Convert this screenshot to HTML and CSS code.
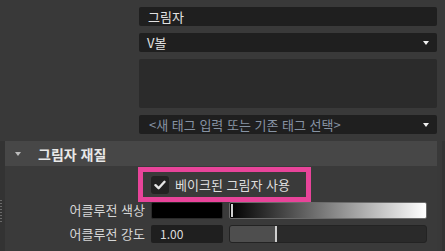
FILE: index.html
```html
<!DOCTYPE html>
<html lang="ko">
<head>
<meta charset="utf-8">
<link rel="stylesheet" href="styles.css">
</head>
<body>
<div class="app">
  <div class="top">
    <div class="field">그림자</div>
    <div class="field select"><span>V볼</span><span class="arrow"></span></div>
    <div class="textarea"></div>
    <div class="field select placeholder"><span>&lt;새 태그 입력 또는 기존 태그 선택&gt;</span><span class="arrow"></span></div>
  </div>
  <div class="section-wrap">
    <div class="left-strip"><div class="grip"></div></div>
    <div class="section">
      <div class="section-header"><span class="hdr-arrow"></span><span class="hdr-title">그림자 재질</span></div>
      <div class="section-body">
        <div class="check-row">
          <div class="highlight">
            <span class="checkbox"><svg width="12" height="10" viewBox="0 0 12 10"><path d="M1.5 5.2 L4.6 8.2 L10.5 1.8" fill="none" stroke="#e6e6e6" stroke-width="2.4" stroke-linecap="round" stroke-linejoin="round"/></svg></span>
            <span class="check-label">베이크된 그림자 사용</span>
          </div>
        </div>
        <div class="prop-row first">
          <span class="prop-label">어클루전 색상</span>
          <span class="swatch"></span>
          <span class="gradient"><span class="grad-handle"></span></span>
        </div>
        <div class="prop-row">
          <span class="prop-label">어클루전 강도</span>
          <span class="num">1.00</span>
          <span class="slider"><span class="slider-fill"></span><span class="slider-handle"></span></span>
        </div>
      </div>
    </div>
    <div class="right-strip"></div>
  </div>
</div>
</body>
</html>
```
FILE: styles.css
```css
* { box-sizing: border-box; }
html, body {
  margin: 0;
  padding: 0;
  width: 445px;
  height: 251px;
  overflow: hidden;
  background: #393939;
  font-family: "Noto Sans CJK KR", "Noto Sans", sans-serif;
  font-size: 13px;
  color: #dcdcdc;
}
.app {
  display: flex;
  flex-direction: column;
  height: 251px;
}
.top {
  display: flex;
  flex-direction: column;
  gap: 7px;
  padding: 7px 8px 0 139px;
}
.field {
  height: 19px;
  background: #1f1f1f;
  border-radius: 2px;
  display: flex;
  align-items: center;
  justify-content: space-between;
  padding: 0 8px 0 9px;
  line-height: 19px;
  color: #e2e2e2;
  white-space: nowrap;
}
.select { padding-left: 8px; }
.arrow {
  width: 0;
  height: 0;
  border-left: 3.5px solid transparent;
  border-right: 3.5px solid transparent;
  border-top: 4px solid #f0f0f0;
}
.textarea {
  height: 49px;
  background: #2b2b2b;
  border-radius: 2px;
}
.placeholder {
  color: #8793a3;
  padding-left: 10px;
}
.section-wrap {
  margin-top: 7px;
  flex: 1;
  display: flex;
}
.left-strip {
  width: 5px;
  background: #333333;
}
.grip {
  margin-top: 59px;
  width: 2px;
  height: 22px;
  background: repeating-linear-gradient(to bottom, #6a6a6a 0 1px, transparent 1px 3px);
}
.right-strip {
  width: 8px;
  background: linear-gradient(to right, #393939 0 5px, #333333 5px);
}
.section {
  flex: 1;
  display: flex;
  flex-direction: column;
}
.section-header {
  height: 25px;
  background: #474747;
  display: flex;
  align-items: center;
  padding-left: 10px;
}
.hdr-arrow {
  width: 0;
  height: 0;
  border-left: 3.5px solid transparent;
  border-right: 3.5px solid transparent;
  border-top: 4px solid #bdbdbd;
}
.hdr-title {
  margin-left: 17px;
  font-weight: bold;
  font-size: 14px;
  color: #e8e8e8;
}
.section-body {
  flex: 1;
  background: #3a3a3a;
  display: flex;
  flex-direction: column;
}
.check-row {
  padding: 1px 0 0 133px;
  display: flex;
}
.highlight {
  width: 173px;
  height: 35px;
  border: 5px solid #e8449a;
  display: flex;
  align-items: center;
  padding-left: 8px;
  gap: 6px;
  white-space: nowrap;
}
.checkbox {
  width: 18px;
  height: 18px;
  background: #222222;
  border-radius: 3px;
  display: flex;
  align-items: center;
  justify-content: center;
}
.check-label {
  color: #dedede;
  line-height: 18px;
}
.prop-row {
  display: grid;
  grid-template-columns: 140px 72px 198px;
  column-gap: 6px;
  align-items: center;
  height: 18px;
  margin-top: 6px;
}
.prop-row.first { margin-top: -1px; }
.prop-label {
  text-align: right;
  color: #d6d6d6;
  line-height: 18px;
  white-space: nowrap;
}
.swatch {
  height: 17px;
  background: #000;
  border: 1px solid #2a2a2a;
  border-radius: 2px;
}
.gradient {
  height: 17px;
  border: 1px solid #6b6b6b;
  border-radius: 2px;
  background: linear-gradient(to right, #000, #fff);
  position: relative;
}
.grad-handle {
  position: absolute;
  left: 1px;
  top: 1px;
  bottom: 1px;
  width: 2px;
  background: #cfcfcf;
}
.num {
  height: 18px;
  background: #1f1f1f;
  border-radius: 2px;
  padding-left: 9px;
  line-height: 18px;
  font-size: 12px;
  color: #dcdcdc;
}
.slider {
  height: 18px;
  background: #2a2a2a;
  border: 1px solid #232323;
  border-radius: 3px;
  display: flex;
}
.slider-fill {
  width: 45px;
  background: #4e4e4e;
  border-radius: 2px 0 0 2px;
}
.slider-handle {
  width: 2px;
  background: #cfcfcf;
}
```
